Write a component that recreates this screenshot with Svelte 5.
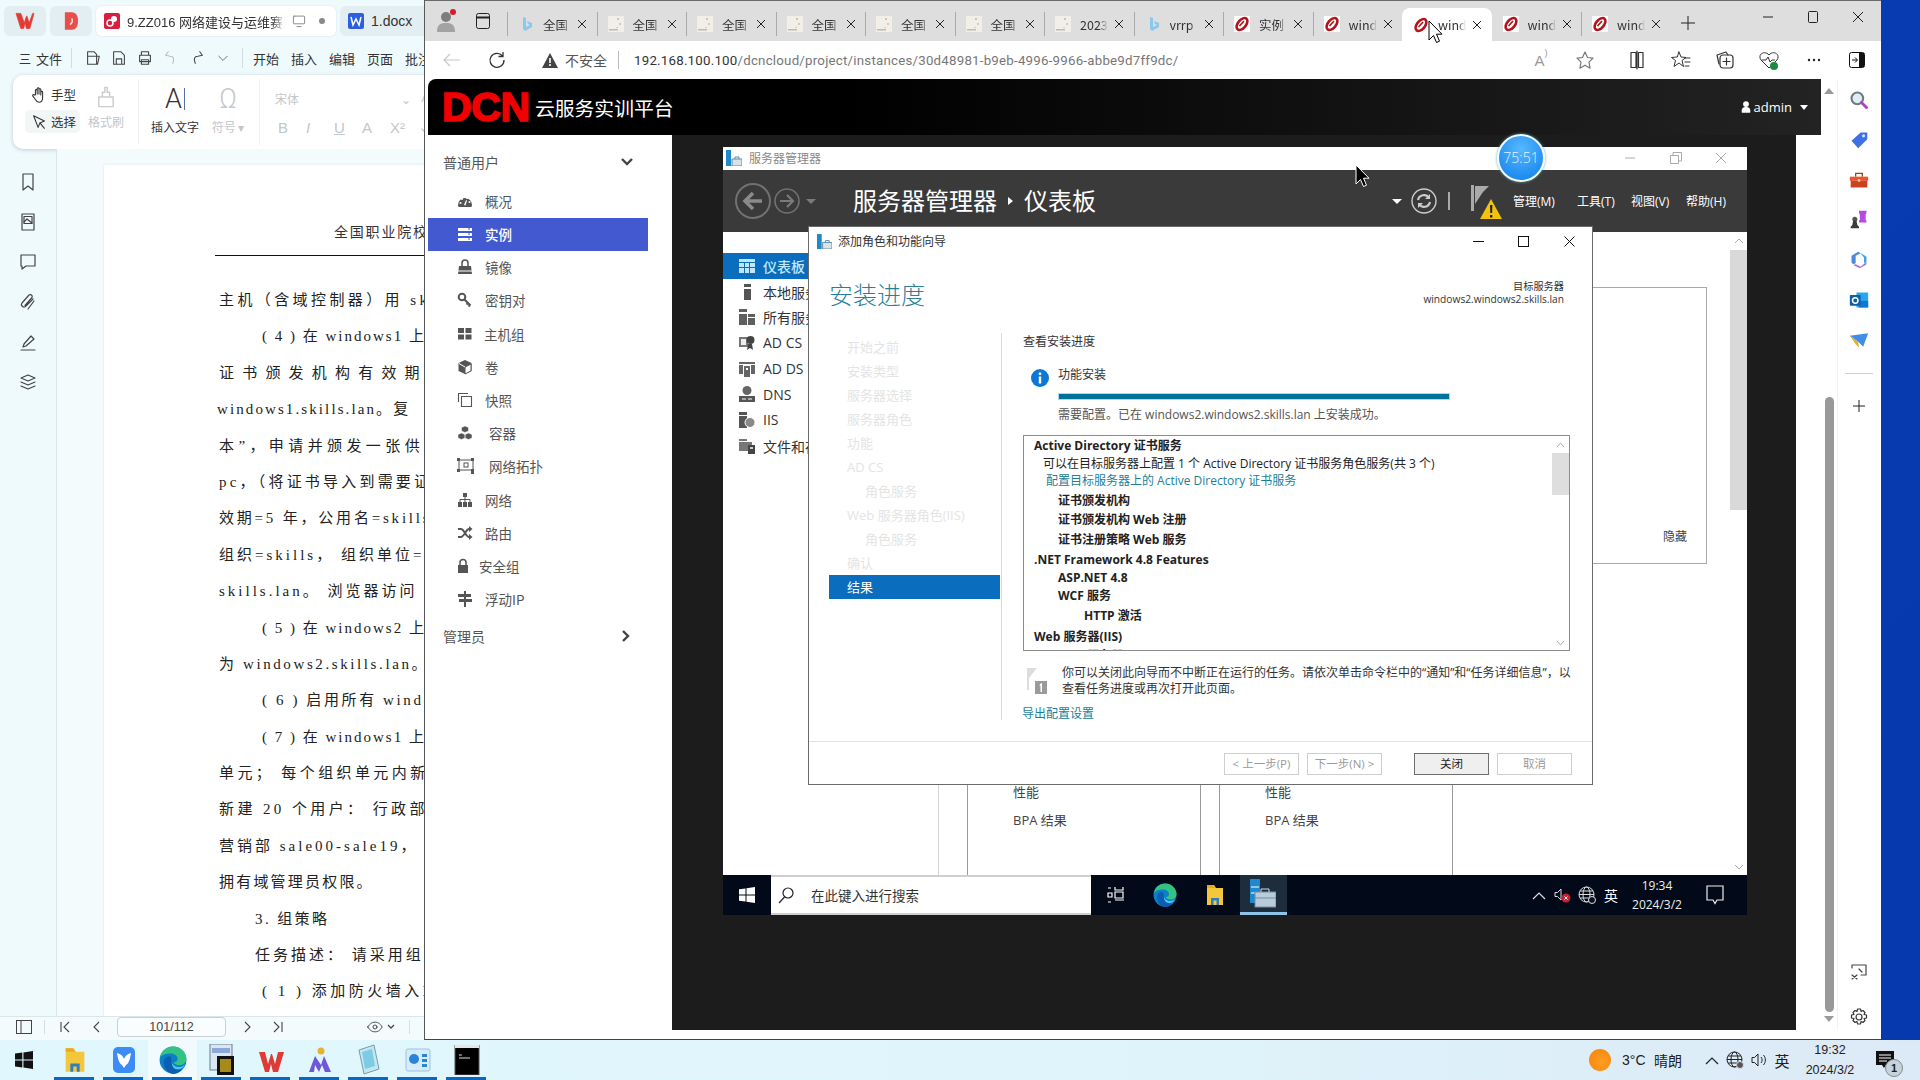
<script>
const svg = (w, h, vb, inner, extra = '') => `<svg width="${w}" height="${h}" viewBox="${vb}" ${extra}>${inner}</svg>`;
const s14 = (inner) => svg(16, 16, '0 0 16 16', inner);
const G = '#555';
const edgeLogo = (n) => svg(n, n, '0 0 24 24', `<circle cx="12" cy="12" r="11.5" fill="#0b7fc9"/><path d="M1 10C2 4 7 .5 12 .5c6.500 0 11.500 5 11.500 10.500 0 3.500-3 5.500-6 5.500-2.500 0-4.500-1-5-2.500 3 0 3.500-2 3.500-3 0-2.500-3-4.500-6-4.500C6 6.500 2.500 7.500 1 10z" fill="#33c481"/><path d="M4 14c0-3.500 3-5.500 6-5 1 3 1 9 5 11 2 1 4 .500 5 0-2.500 3-5.500 4-8 4-4.500-.500-8-5-8-10z" fill="#0a5fb0"/><path d="M11 13c0 3 3 5 6.500 5 2 0 3.500-1 4.500-2-1 2.500-3 4-6 4-3.500 0-5.500-3.500-5-7z" fill="#52c6f0"/>`);
const folder = (n) => svg(n, n, '0 0 24 24', `<path d="M4 2h7l2 3h7v17H4z" fill="#f3c63c"/><path d="M4 2h6l2 3H4z" fill="#e8a91b"/><path d="M8 22v-7h8v7h-2.500v-4.500h-3V22z" fill="#2f7fbf"/>`);
const bing = s14(`<path d="M5 1l3 1v9l4-2-2-1-1-3 5 2v4l-7 4-2-2z" fill="#8cc8ec"/>`);
const doc = s14(`<rect width="16" height="16" fill="#f1efe8"/><rect x="9" y="2" width="2" height="2" fill="#cfc8a8"/><rect x="11" y="7" width="2" height="2" fill="#d8c9b8"/><rect x="8" y="11" width="2" height="1" fill="#d0d0c8"/><rect x="1" y="13" width="9" height="1.500" fill="#bbb"/>`);
const dcn = s14(`<rect width="16" height="16" fill="#fff"/><ellipse cx="8" cy="8" rx="7" ry="4" transform="rotate(-50 8 8)" fill="none" stroke="#b5121b" stroke-width="2.600"/><path d="M5.500 10L10 5" stroke="#b5121b" stroke-width="1.600"/>`);
const tabs = [[bing,'全国'],[doc,'全国'],[doc,'全国'],[doc,'全国'],[doc,'全国'],[doc,'全国'],[doc,'2023'],[bing,'vrrp'],[dcn,'实例'],[dcn,'wind'],[dcn,'wind',1],[dcn,'wind'],[dcn,'wind']];

const lineIc = (n, inner, c = '#444') => svg(n, n, '0 0 20 20', `<g fill="none" stroke="${c}" stroke-width="1.200" stroke-linecap="round" stroke-linejoin="round">${inner}</g>`);
const navItems = [
 ['概况', 28, s14(`<path d="M1 12a7 7 0 1 1 14 0c0 1-.5 2-1 2H2c-.5 0-1-1-1-2z" fill="${G}"/><circle cx="5" cy="6" r="1" fill="#fff"/><circle cx="10" cy="5" r="1" fill="#fff"/><circle cx="12.500" cy="9" r="1" fill="#fff"/><circle cx="3.500" cy="10" r="1" fill="#fff"/><path d="M7 12l2-5 1 .5-1.500 5z" fill="#fff"/>`)],
 ['实例', 28, s14(`<path d="M1 2h14v3H1zM1 7h14v3H1zM1 12h14v3H1z" fill="#fff"/><path d="M11 3h2M11 8h2M11 13h2" stroke="#4359cf"/>`), 1],
 ['镜像', 28, s14(`<path d="M2 7h12l1 8H1z" fill="${G}"/><path d="M5 7V4a3 3 0 0 1 6 0v3" fill="none" stroke="${G}" stroke-width="1.500"/><path d="M1 12h14" stroke="#fff"/>`)],
 ['密钥对', 28, s14(`<circle cx="5" cy="5" r="3.300" fill="none" stroke="${G}" stroke-width="2"/><path d="M7.500 7.500l6 6M11 11l-1.500 1.500M13 13l-1.500 1.500" stroke="${G}" stroke-width="2"/>`)],
 ['主机组', 27, s14(`<path d="M1 2h6v5H1zM8.500 2h6v5h-6zM1 8.500h6v5H1zM8.500 8.500h6v5h-6z" fill="${G}"/>`)],
 ['卷', 28, s14(`<path d="M8 1l6.500 3v8L8 15l-6.500-3V4z" fill="${G}"/><path d="M8 8l6-3v7l-6 3z" fill="#fff" stroke="${G}"/><path d="M2 4.500L8 8" stroke="#fff"/>`)],
 ['快照', 28, s14(`<path d="M1.500 10V1.500H11M4.500 4.500h10v10h-10z" fill="none" stroke="${G}" stroke-width="1.100"/>`)],
 ['容器', 32, s14(`<path d="M8 1l3.500 1.500V6L8 7.500 4.500 6V2.500zM4.500 8L8 9.500V13l-3.500 1.500L1 13V9.500zM11.500 8L15 9.500V13l-3.500 1.500L8 13V9.500z" fill="${G}" stroke="#fff" stroke-width=".500"/>`)],
 ['网络拓扑', 32, svg(18, 16, '0 0 18 16', `<g fill="none" stroke="${G}"><rect x="2" y="2" width="14" height="10"/><rect x="7" y="5" width="4" height="4"/></g><g fill="${G}"><rect x="0" y="0" width="3" height="3"/><rect x="14" y="0" width="3" height="3"/><rect x="0" y="11" width="3" height="3"/><rect x="14" y="11" width="3" height="3"/><rect x="14" y="13" width="3" height="3"/></g>`)],
 ['网络', 28, s14(`<path d="M6 1h4v4H6zM1 10h4v5H1zM6 10h4v5H6zM11 10h4v5h-4z" fill="${G}"/><path d="M3 10V7.500h10V10M8 5v5" fill="none" stroke="${G}"/>`)],
 ['路由', 28, s14(`<path d="M1 4h3c3 0 5 8 8 8h1M1 12h3c3 0 5-8 8-8h1" fill="none" stroke="${G}" stroke-width="2"/><path d="M12 1l3.500 3-3.500 3zM12 9l3.500 3-3.500 3z" fill="${G}"/>`)],
 ['安全组', 22, s14(`<rect x="1" y="7" width="10" height="8" fill="${G}"/><path d="M3 7V4.500a3 3 0 0 1 6 0V7" fill="none" stroke="${G}" stroke-width="1.500"/>`)],
 ['浮动IP', 28, s14(`<path d="M7 0h2v16H7zM1 3h13v3H1zM2 8h13v3H2z" fill="${G}"/>`)],
];

const smIcon = `<rect x="0" y="0" width="5" height="16" fill="#1f89c9"/><path d="M6 9h10v7H6z" fill="#d8e3ea" stroke="#5c89a6"/><path d="M9 9V7h4v2" fill="none" stroke="#5c89a6"/>`;
const smNav = [
 ['本地服务器', svg(16, 16, '0 0 16 16', `<path d="M5 0h7v3H5zM5 5h7v11H5z" fill="#555"/>`)],
 ['所有服务器', svg(16, 16, '0 0 16 16', `<path d="M0 0h8v3H0zM0 5h8v11H0zM9 5h7v3H9zM9 9h7v7H9z" fill="#5f5f5f"/>`)],
 ['AD CS', svg(16, 16, '0 0 16 16', `<path d="M0 2h9v10H0z" fill="#777"/><path d="M2 4h5v6H2z" fill="#eee"/><circle cx="11.500" cy="5" r="4" fill="#444"/><path d="M9 9l-1 6 3-2 3 2-1-6z" fill="#444"/>`)],
 ['AD DS', svg(16, 16, '0 0 16 16', `<path d="M0 1h16v2H0zM0 4h4v9H0zM12 4h4v9h-4zM5 5h6v11H5z" fill="#666"/><path d="M7 7h2v2H7z" fill="#fff"/>`)],
 ['DNS', svg(16, 16, '0 0 16 16', `<circle cx="8" cy="4.500" r="4.500" fill="#666"/><path d="M0 10h16v6H0z" fill="#555"/><path d="M3 13h4M9 13h4" stroke="#fff"/>`)],
 ['IIS', svg(16, 16, '0 0 16 16', `<path d="M0 0h8v3H0zM0 4h8v12H0z" fill="#555"/><circle cx="11" cy="10.500" r="5" fill="#888" stroke="#fff"/>`)],
 ['文件和存储服务', svg(16, 16, '0 0 16 16', `<path d="M0 1h8v2H0zM0 4h13v9H0z" fill="#777"/><path d="M9 7h7v9H9z" fill="#444"/><path d="M11 9h3v2h-3z" fill="#ccc"/>`)],
];
const steps = [['开始之前'],['安装类型'],['服务器选择'],['服务器角色'],['功能'],['AD CS'],['角色服务',1],['Web 服务器角色(IIS)'],['角色服务',1],['确认']];
const listRows = [
 ['Active Directory 证书服务','b',20,10],
 ['可以在目标服务器上配置 1 个 Active Directory 证书服务角色服务(共 3 个)','n',16,19],
 ['配置目标服务器上的 Active Directory 证书服务','l',18.5,22],
 ['证书颁发机构','b',19.5,34],
 ['证书颁发机构 Web 注册','b',19.5,34],
 ['证书注册策略 Web 服务','b',20,34],
 ['.NET Framework 4.8 Features','b',19,10],
 ['ASP.NET 4.8','b',18.500,34],
 ['WCF 服务','b',18.500,34],
 ['HTTP 激活','b',20,60],
 ['Web 服务器(IIS)','b',21,10],
 ['Web 服务器','b',18,34],
];
const docLines = [
 ['主机（含域控制器）用 skills',115,3.4],
 ['( 4 ) 在 windows1 上',158,2],
 ['证书颁发机构有效期',115,8.2],
 ['windows1.skills.lan。复',113,2.1],
 ['本”，申请并颁发一张供 w',115,4.4],
 ['pc，（将证书导入到需要证',115,3.2],
 ['效期=5 年，公用名=skills',115,2.8],
 ['组织=skills， 组织单位=',115,3],
 ['skills.lan。 浏览器访问',115,3],
 ['( 5 ) 在 windows2 上',158,2],
 ['为 windows2.skills.lan。',115,2.6],
 ['( 6 ) 启用所有 windows',158,2.6],
 ['( 7 ) 在 windows1 上',158,2],
 ['单元； 每个组织单元内新',115,3.4],
 ['新建 20 个用户： 行政部 ma',115,3.4],
 ['营销部 sale00-sale19，',115,3],
 ['拥有域管理员权限。',115,2.2],
 ['3. 组策略',151,2.4],
 ['任务描述： 请采用组策',151,3],
 ['( 1 ) 添加防火墙入站',158,3.5],
];
const railIcons = [
 lineIc(20,`<path d="M5 2h10v16l-5-4-5 4z"/>`),
 lineIc(20,`<rect x="4" y="2" width="12" height="16"/><rect x="6" y="4.500" width="8" height="7"/><path d="M6 10l3-3 5 4"/>`),
 lineIc(20,`<path d="M3 3h14v11H8l-4 3v-3H3z"/>`),
 lineIc(20,`<path d="M15 7L8 14a2.500 2.500 0 0 1-4-3l7-8a2 2 0 0 1 3 2.500l-7 8"/><path d="M16 9l-6 8"/>`),
 lineIc(20,`<path d="M6 12l7-8 3 3-8 7-3 1zM3 18h14"/>`),
 lineIc(20,`<path d="M10 3l7 3-7 3-7-3zM3 10l7 3 7-3M3 14l7 3 7-3"/>`),
];
const actionIcons = [
 lineIc(18,`<path d="M4 3h7l3 3v11H4zM4 8h13l-2 9"/>`,'#444'),
 lineIc(18,`<path d="M4 3h8l4 4v10H4zM7 17v-6h6v6"/>`,'#444'),
 lineIc(18,`<path d="M6 7V3h8v4M4 7h12v7H4zM6 12h8v5H6z"/>`,'#444'),
 lineIc(18,`<path d="M7 3L4 7l5 1c4 0 5 3 3 8"/>`,'#bbb'),
 lineIc(18,`<path d="M13 3l3 4-5 1C7 8 6 11 8 16"/>`,'#444'),
 lineIc(12,`<path d="M3 7l7 7 7-7"/>`,'#444'),
];
const edgeTools = [
 lineIc(20,`<path d="M4 2.500h5v15H4zM11.500 2.500H16v15h-4.500zM10 1v18"/>`,'#333'),
 lineIc(20,`<path d="M8 2l2 5 5 .5-4 3 1.500 6L8 13l-5 3.500 1.500-6-4-3 5.500-.5zM14 8h5M14 12h5M14 16h4" stroke-width="1"/>`,'#333'),
 lineIc(20,`<rect x="5" y="5" width="13" height="13" rx="3"/><path d="M4 14l-2-9 9-3 2 3M11.500 8v7M8 11.500h7"/>`,'#333'),
];
const rail = [
 svg(20,20,'0 0 24 24',`<circle cx="10" cy="10" r="7" fill="#dfeef5" stroke="#6e7c80" stroke-width="2.500"/><path d="M15 15l6 6" stroke="#b23fc0" stroke-width="3.500" stroke-linecap="round"/>`),
 svg(20,20,'0 0 24 24',`<path d="M3 13L14 3h8v8L11 22z" fill="#3f6fe8"/><circle cx="17.500" cy="7" r="2" fill="#cfe0ff"/>`),
 svg(20,20,'0 0 24 24',`<path d="M8 8V4h8v4" fill="none" stroke="#9c3f1c" stroke-width="1.500"/><path d="M1 8h22v5H1z" fill="#e8562a"/><path d="M2 13h20v8H2z" fill="#c8431e"/><rect x="10.500" y="11" width="3" height="3" fill="#f3d5b0"/>`),
 svg(20,20,'0 0 24 24',`<path d="M12 1h9v3l-1 1v7l1 1v2h-9v-2l1-1V5l-1-1z" fill="#b948e2"/><circle cx="7" cy="11" r="3" fill="#555"/><path d="M5 13h4l1 5 2 2v2H2v-2l2-2z" fill="#3a3a3a"/>`),
 svg(20,20,'0 0 24 24',`<path d="M3 7l8-5 3 2-6 3v9l-3 1-2-2z" fill="#4a8be0"/><path d="M13 3l8 5v6l-3 2V9z" fill="#3aa4e8"/><path d="M5 18l3-1 6 3 7-6c0 2 0 3-1 4l-7 4z" fill="#a070e0"/><circle cx="12" cy="12" r="3.500" fill="#fff"/>`),
 svg(20,20,'0 0 24 24',`<path d="M9 3h14v18H9z" fill="#28a8ea"/><path d="M12 13h11v8H12z" fill="#0a78d4"/><rect x="1" y="6" width="13" height="13" rx="1" fill="#0f5fa8"/><circle cx="7.500" cy="12.500" r="3.300" fill="none" stroke="#fff" stroke-width="1.800"/>`),
 svg(20,20,'0 0 24 24',`<path d="M1 7l22-3-6 16-6-6z" fill="#3f8ee8"/><path d="M1 7l10 7 1 7-4-4z" fill="#d9b23c"/>`),
];
const winLogo = (n, c) => svg(n, n, '0 0 16 16', `<path d="M0 2.300L6.500 1.400V7.500H0zM7.500 1.300L16 0v7.500H7.500zM0 8.500h6.500v6.100L0 13.700zM7.500 8.500H16V16l-8.500-1.300z" fill="${c}"/>`);
const taskIcons = [
 [folder(28)],
 [svg(28,28,'0 0 28 28',`<rect x="3" y="1" width="22" height="26" rx="5" fill="#3d8cf5"/><path d="M7 7c4 1 6 3 7 6 1-3 3-5 7-6-1 6-2 10-5 12l-2 3-2-3c-3-2-4-6-5-12z" fill="#fff"/>`)],
 [edgeLogo(28),1],
 [svg(28,32,'0 0 28 32',`<rect x="2" y="0" width="22" height="26" fill="#dce6f2" stroke="#6a7a90"/><rect x="4" y="4" width="18" height="5" fill="#8aa8d8"/><rect x="9" y="12" width="17" height="19" fill="#111"/><rect x="12" y="15" width="11" height="13" fill="#a88a1c"/>`)],
 [svg(28,28,'0 0 28 28',`<path d="M2 6h6l3 12 3-10h1l3 10 3-12h6l-6 20h-5l-2-8-2 8H8z" fill="#e03a36"/>`)],
 [svg(28,28,'0 0 28 28',`<circle cx="15" cy="5" r="3.500" fill="#eab12e"/><path d="M3 26l6-16 6 9 3-9 7 16h-6l-3-7-3 7-4-7-1 7z" fill="#6e58d8"/>`)],
 [svg(28,32,'0 0 28 32',`<path d="M4 6l15-5 5 24-15 5z" fill="#bfe8f2" stroke="#7d9aa8"/><path d="M7 8l10-3 3 17-10 3z" fill="#7dcbe4"/>`)],
 [svg(28,28,'0 0 28 28',`<rect x="2" y="3" width="24" height="22" rx="2" fill="#d5ecfa" stroke="#9cc4e0"/><circle cx="10" cy="13" r="5" fill="#2a84d8"/><path d="M18 8h5v3h-5zM18 13h5v3h-5zM18 18h5v3h-5z" fill="#2a84d8"/>`)],
 [svg(28,30,'0 0 28 30',`<rect x="2" y="0" width="24" height="30" fill="#000" stroke="#555"/><rect x="2" y="0" width="24" height="3" fill="#e6e6e6"/><path d="M6 10h3M6 13h6M12 13h5" stroke="#ddd"/>`)],
];
const pg = (d) => svg(14,14,'0 0 14 14',`<path d="${d}" fill="none" stroke="#444" stroke-width="1.100"/>`);
</script>

<div class="desk">
  <div class="screen">
    <section class="wps">
      <div class="wtabs">
        <div class="wtile"><span class="wlogo">{@html svg(20,18,'0 0 28 26',`<path d="M1 2h7l5 14 3-10h1l3 10 5-14h2l-6 22h-5l-2-8-2 8H8z" fill="#e33a33" stroke="#e33a33"/>`)}</div>
        <div class="wtile">{@html svg(14,18,'0 0 16 20',`<path d="M1 0h8c5 0 7 4 7 10s-2 10-7 10H1z" fill="#ea4e4a"/><path d="M7 14c3-2 3-4 2-7" fill="none" stroke="#fff" stroke-width="1.500"/>`)}</div>
        <div class="wtab active">
          {@html svg(16,16,'0 0 16 16',`<rect width="16" height="16" rx="2" fill="#d81e3f"/><circle cx="6" cy="10" r="3" fill="none" stroke="#fff" stroke-width="1.500"/><circle cx="10" cy="6" r="3" fill="#fff"/>`)}
          <span class="wtt">9.ZZ016 网络建设与运维赛题库</span>
          {@html lineIc(14,`<rect x="2" y="3" width="16" height="11" rx="1"/><path d="M7 18h6"/>`,'#777')}
          <i class="wdot"></i>
        </div>
        <div class="wtab">
          {@html svg(16,16,'0 0 16 16',`<rect width="16" height="16" rx="2" fill="#2b5fe0"/><path d="M3 4l2 8 3-6 3 6 2-8" fill="none" stroke="#fff" stroke-width="1.500"/>`)}
          <span>1.docx</span>
        </div>
      </div>
      <div class="wmenu">
        <span class="hb">三</span><span class="mi">文件</span><i class="vs"></i>
        {#each actionIcons as a}<span class="act">{@html a}</span>{/each}
        <i class="vs s2"></i>
        {#each ['开始','插入','编辑','页面','批注'] as m}<span class="mt">{m}</span>{/each}
      </div>
      <div class="wcard">
        <div class="grp g1">
          <div class="tl"><span class="tic">{@html lineIc(18,`<path d="M6 10V5a1 1 0 0 1 2 0v4V3a1 1 0 0 1 2 0v6-5a1 1 0 0 1 2 0v6-3a1 1 0 0 1 2 0v6c0 4-2 5-4 5s-3-1-4-3l-3-4c-.5-1 1-2 2-1z"/>`,'#333')}</span>手型</div>
          <div class="tl sel"><span class="tic">{@html lineIc(18,`<path d="M4 3l12 6-5 2-2 5z M11 11l5 6"/>`,'#333')}</span>选择</div>
        </div>
        <div class="grp g2 off">
          {@html lineIc(24,`<path d="M4 10h12v8H4zM7 10V6h2V2h2v4h2v4"/>`,'#ccc')}
          <span>格式刷</span>
        </div>
        <i class="cs"></i>
        <div class="grp g3">
          <span class="big">A<i class="ibar"></i></span>
          <span>插入文字</span>
        </div>
        <div class="grp g4 off">
          <span class="big om">Ω</span>
          <span>符号 ▾</span>
        </div>
        <i class="cs c3"></i>
        <div class="grp g5 off">
          <div class="fontrow"><span>宋体</span><span class="fr">⌄</span><span class="fs">小</span></div>
          <div class="fmt"><span class="fb">B</span><span class="fb it">I</span><span class="fb un">U</span><span class="fb">A</span><span class="fb">X²</span><span class="fc">⌄</span></div>
        </div>
      </div>
      <div class="wmain">
        <div class="wrail">{#each railIcons as r}<span>{@html r}</span>{/each}</div>
        <div class="wdoc">
          <div class="page">
            <div class="phead">全国职业院校技能大赛</div>
            <div class="phr"></div>
            {#each docLines as l}<div class="pl" style="padding-left:{l[1]}px;letter-spacing:{l[2]}px">{l[0]}</div>{/each}
          </div>
        </div>
      </div>
      <div class="wstat">
        <span class="st1">{@html svg(16,14,'0 0 16 14',`<rect x=".5" y=".5" width="15" height="13" fill="none" stroke="#444"/><path d="M5 1v12" stroke="#444"/>`)}</span>
        <i class="ss"></i>
        <span class="nv n1">{@html pg('M3 2v10M11 2L6 7l5 5')}</span>
        <span class="nv n2">{@html pg('M9 2L4 7l5 5')}</span>
        <span class="pgbox">101/112</span>
        <span class="nv n3">{@html pg('M5 2l5 5-5 5')}</span>
        <span class="nv n4">{@html pg('M3 2l5 5-5 5M11 2v10')}</span>
        <span class="eye">{@html lineIc(16,`<path d="M1 10c3-5 6-6 9-6s6 1 9 6c-3 5-6 6-9 6s-6-1-9-6z"/><circle cx="10" cy="10" r="2.500"/>`,'#444')}</span><span class="ch">{@html svg(8,6,'0 0 8 6',`<path d="M1 1l3 3 3-3" fill="none" stroke="#444" stroke-width="1.300"/>`)}</span>
        <i class="ss s3"></i>
      </div>
    </section>

    <section class="edge">
      <div class="strip">
        <div class="prof">
          <span class="avatar">{@html svg(22,26,'0 0 22 26',`<circle cx="10" cy="9" r="5" fill="#7d7d7d"/><path d="M1 24c0-8 4-9 9-9s9 1 9 9z" fill="#a3a3a3"/><circle cx="17" cy="4" r="3" fill="#d81b2c"/>`)}</span>
          <span class="tabact">{@html svg(14,16,'0 0 14 16',`<rect x=".5" y=".5" width="13" height="15" rx="2" fill="none" stroke="#222"/><path d="M1 4.500h12" stroke="#222" stroke-width="2"/>`)}</span>
        </div>
        <div class="tabs">
          {#each tabs as t}
            <div class="tab" class:on={t[2]}>
              <span class="fav">{@html t[0]}</span>
              <span class="tt">{t[1]}</span>
              <span class="tx">{@html svg(10,10,'0 0 10 10',`<path d="M1 1l8 8M9 1l-8 8" stroke="#222" stroke-width="1"/>`)}</span>
            </div>
          {/each}
        </div>
        <span class="plus">{@html svg(16,16,'0 0 16 16',`<path d="M8 1v14M1 8h14" stroke="#222"/>`)}</span>
        <div class="wctl">
          <span>{@html svg(12,12,'0 0 12 12',`<path d="M1 6h10" stroke="#222"/>`)}</span>
          <span>{@html svg(12,12,'0 0 12 12',`<rect x="1.500" y=".5" width="9" height="11" rx="1" fill="none" stroke="#222"/>`)}</span>
          <span>{@html svg(12,12,'0 0 12 12',`<path d="M1 1l10 10M11 1L1 11" stroke="#222"/>`)}</span>
        </div>
      </div>
      <div class="addr">
        <span class="back">{@html svg(18,14,'0 0 18 14',`<path d="M17 7H1M7 1L1 7l6 6" fill="none" stroke="#c8c8c8" stroke-width="1.200"/>`)}</span>
        <span class="rel">{@html svg(18,18,'0 0 18 18',`<path d="M14.500 5A7 7 0 1 0 16 9M15 1v4.500h-4.500" fill="none" stroke="#333" stroke-width="1.300"/>`)}</span>
        <span class="warn">{@html svg(16,15,'0 0 16 15',`<path d="M8 0l8 15H0z" fill="#444"/><path d="M7.200 5h1.600v5H7.200zM7.200 11h1.600v2H7.200z" fill="#fff"/>`)}</span>
        <span class="insec">不安全</span>
        <i class="asep"></i>
        <span class="url"><b>192.168.100.100</b>/dcncloud/project/instances/30d48981-b9eb-4996-9966-abbe9d7ff9dc/</span>
        <div class="tools">
          <span class="t1 ra">A<small>)</small></span>
          <span class="t2">{@html lineIc(20,`<path d="M10 2l2.500 5.500 5.500.7-4 4 1 6-5-3-5 3 1-6-4-4 5.500-.7z"/>`,'#777')}</span>
          <span class="t3">{@html edgeTools[0]}</span>
          <span class="t4">{@html edgeTools[1]}</span>
          <span class="t5">{@html edgeTools[2]}</span>
          <span class="t6">{@html svg(22,22,'0 0 22 22',`<path d="M11 19L3 11c-4-6 4-10 8-5 4-5 12-1 8 5z" fill="none" stroke="#333"/><path d="M4 11h4l2-3 2 5 2-2h3" fill="none" stroke="#333"/><circle cx="16" cy="17" r="4" fill="#1e8a3e"/>`)}</span>
          <span class="t7">{@html svg(14,4,'0 0 14 4',`<circle cx="2" cy="2" r="1.200" fill="#222"/><circle cx="7" cy="2" r="1.200" fill="#222"/><circle cx="12" cy="2" r="1.200" fill="#222"/>`)}</span>
          <span class="t8">{@html svg(16,16,'0 0 16 16',`<rect x=".5" y=".5" width="15" height="15" rx="2" fill="none" stroke="#111"/><rect x="10" y="1" width="5" height="14" fill="#111"/><path d="M3 8h5M6 5.500L8.500 8 6 10.500" fill="none" stroke="#111"/>`)}</span>
        </div>
      </div>
      <div class="viewport">
        <div class="pagewrap">
          <header class="dhead">
            <span class="dlogo">DCN</span>
            <span class="dname">云服务实训平台</span>
            <span class="admin">{@html svg(10,14,'0 0 12 14',`<circle cx="6" cy="3.500" r="3.500" fill="#fff"/><path d="M1 14c-1-6 2-7 5-7s6 1 5 7z" fill="#fff"/>`)}admin<i class="caret"></i></span>
          </header>
          <div class="dbody">
            <aside class="snav">
              <div class="sect"><span>普通用户</span>{@html svg(12,10,'0 0 12 10',`<path d="M1 2l5 5 5-5" fill="none" stroke="#444" stroke-width="2.400"/>`)}</div>
              {#each navItems as n}
                <div class="sit" class:cur={n[3]}>
                  <span class="sic" style="width:{n[1]}px">{@html n[2]}</span><span>{n[0]}</span>
                </div>
              {/each}
              <div class="sect s2"><span>管理员</span>{@html svg(10,12,'0 0 10 12',`<path d="M2 1l5 5-5 5" fill="none" stroke="#444" stroke-width="2.400"/>`)}</div>
            </aside>
            <main class="stage">
              <div class="vm">
                <div class="vtitle">
                  <span class="vic">{@html svg(16,16,'0 0 16 16',smIcon)}</span>
                  <span class="vname">服务器管理器</span>
                  <div class="vctl">
                    <span>{@html svg(12,12,'0 0 12 12',`<path d="M1 6h10" stroke="#aaa"/>`)}</span>
                    <span>{@html svg(12,12,'0 0 12 12',`<path d="M.5 3.500h8v8h-8zM3 3V.5h8.500V9H9" fill="none" stroke="#aaa"/>`)}</span>
                    <span>{@html svg(12,12,'0 0 12 12',`<path d="M1 1l10 10M11 1L1 11" stroke="#aaa"/>`)}</span>
                  </div>
                </div>
                <div class="vhead">
                  <span class="backb">{@html svg(36,36,'0 0 36 36',`<circle cx="18" cy="18" r="17" fill="none" stroke="#717171" stroke-width="2"/><path d="M27 18H11M18 10l-8 8 8 8" fill="none" stroke="#8a8a8a" stroke-width="3.500"/>`)}</span>
                  <span class="fwdb">{@html svg(26,26,'0 0 26 26',`<circle cx="13" cy="13" r="12" fill="none" stroke="#717171" stroke-width="1.600"/><path d="M6 13h13M13 7l6 6-6 6" fill="none" stroke="#7a7a7a" stroke-width="2.200"/>`)}</span>
                  <i class="ddn gray"></i>
                  <span class="crumb">服务器管理器</span>
                  <i class="crumbar"></i>
                  <span class="crumb c2">仪表板</span>
                  <div class="vr">
                    <i class="ddn"></i>
                    <span class="refresh">{@html svg(26,26,'0 0 26 26',`<circle cx="13" cy="13" r="12" fill="none" stroke="#ccc" stroke-width="1.400"/><path d="M7 12a6 6 0 0 1 11-2M19 14a6 6 0 0 1-11 2" fill="none" stroke="#ccc" stroke-width="2.200"/><path d="M19 6v5h-5zM7 20v-5h5z" fill="#ccc"/>`)}</span>
                    <i class="vbar"></i>
                    <span class="flag">{@html svg(32,36,'0 0 32 36',`<rect x="0" y="0" width="3" height="26" fill="#aaa"/><path d="M4 1h14l-6 6-8 12z" fill="#aaa"/><path d="M20 14l11 20H9z" fill="#f4c20d"/><path d="M19 20h2.400l-.3 8h-1.800zM19 30h2.400v2.400H19z" fill="#222"/>`)}</span>
                    <span class="vm1">管理(M)</span><span class="vm2">工具(T)</span><span class="vm3">视图(V)</span><span class="vm4">帮助(H)</span>
                  </div>
                </div>
                <div class="vbody">
                  <nav class="vnav">
                    <div class="vrow cur">{@html svg(16,16,'0 0 16 16',`<path d="M0 1h16v3H0zM0 5h5v4H0zM6 5h4v4H6zM11 5h5v4h-5zM0 10h5v5H0zM6 10h4v5H6zM11 10h5v5h-5z" fill="#bfe6ff"/>`)}<span>仪表板</span></div>
                    {#each smNav as r}<div class="vrow">{@html r[1]}<span>{r[0]}</span></div>{/each}
                  </nav>
                  <div class="vcont">
                    <div class="welcome"><span>隐藏</span></div>
                    <div class="cards">
                      <div class="vcard"><span>性能</span><span>BPA 结果</span></div>
                      <div class="vcard"><span>性能</span><span>BPA 结果</span></div>
                    </div>
                  </div>
                  <div class="vscroll">
                    <span>{@html svg(10,6,'0 0 10 6',`<path d="M1 5l4-4 4 4" fill="none" stroke="#aaa"/>`)}</span>
                    <i class="vthumb"></i>
                    <span class="vdn">{@html svg(10,6,'0 0 10 6',`<path d="M1 1l4 4 4-4" fill="none" stroke="#aaa"/>`)}</span>
                  </div>
                </div>
                <div class="vtask">
                  <span class="vstart">{@html winLogo(16,'#fff')}</span>
                  <div class="vsearch">{@html svg(18,18,'0 0 18 18',`<circle cx="11" cy="7" r="5" fill="none" stroke="#222" stroke-width="1.200"/><path d="M7.500 11L2 17" stroke="#222" stroke-width="1.200"/>`)}<span>在此键入进行搜索</span></div>
                  <span class="vt">{@html svg(18,18,'0 0 18 18',`<path d="M1 2h3M1 16h3M8 1v3h8V1M8 6h8v6H8zM8 14h9M1 7h4v4H1z" fill="none" stroke="#fff" stroke-width="1.200"/>`)}</span>
                  <span class="vt">{@html edgeLogo(24)}</span>
                  <span class="vt">{@html folder(24)}</span>
                  <span class="vt act2">{@html svg(26,30,'0 0 26 30',`<rect x="0" y="0" width="10" height="24" fill="#1f89d0"/><path d="M1 8h8M1 14h8" stroke="#fff"/><rect x="5" y="13" width="21" height="15" fill="#b9ccd8" stroke="#6d91a8"/><path d="M11 13v-3h8v3" fill="none" stroke="#cdd"/><path d="M5 19h21" stroke="#6d91a8"/>`)}</span>
                  <div class="vtray">
                    <span class="vti">{@html svg(14,9,'0 0 14 9',`<path d="M1 8l6-6 6 6" fill="none" stroke="#ddd" stroke-width="1.200"/>`)}</span>
                    <span class="vti">{@html svg(18,18,'0 0 18 18',`<path d="M1 6.500h2.500L7 3v11L3.500 10.500H1z" fill="none" stroke="#ddd"/><circle cx="12" cy="12" r="4.500" fill="#c8202c"/><path d="M10.500 10.500l3 3M13.500 10.500l-3 3" stroke="#fff"/>`)}</span>
                    <span class="vti">{@html svg(18,18,'0 0 18 18',`<circle cx="8.500" cy="8.500" r="7.500" fill="none" stroke="#ddd"/><ellipse cx="8.500" cy="8.500" rx="3.500" ry="7.500" fill="none" stroke="#ddd"/><path d="M1 8.500h15M2 5h13M2 12h13" stroke="#ddd"/><circle cx="14" cy="14" r="3.500" fill="#0a1020" stroke="#ddd"/>`)}</span>
                    <span class="vlang">英</span>
                    <span class="vclock"><span>19:34</span><span>2024/3/2</span></span>
                    <span class="vnote">{@html svg(18,20,'0 0 18 20',`<path d="M1 1h16v14H11l-2 3.500L7 15H1z" fill="none" stroke="#eee" stroke-width="1.200"/>`)}</span>
                  </div>
                </div>
                <div class="timer">75:51</div>
                <div class="dialog">
                  <div class="dtitle">
                    <span class="dic">{@html svg(15,15,'0 0 16 16',smIcon)}</span>
                    <span>添加角色和功能向导</span>
                    <div class="dctl">
                      <span>{@html svg(11,11,'0 0 11 11',`<path d="M0 5.500h11" stroke="#111"/>`)}</span>
                      <span>{@html svg(11,11,'0 0 11 11',`<rect x=".5" y=".5" width="10" height="10" fill="none" stroke="#111"/>`)}</span>
                      <span>{@html svg(11,11,'0 0 11 11',`<path d="M.5 .5l10 10M10.500 .5l-10 10" stroke="#111"/>`)}</span>
                    </div>
                  </div>
                  <div class="dhd">
                    <h1>安装进度</h1>
                    <div class="target"><div>目标服务器</div><div>windows2.windows2.skills.lan</div></div>
                  </div>
                  <div class="dmain">
                    <div class="dsteps">
                      {#each steps as s}<div class="stp" class:ind={s[1]}>{s[0]}</div>{/each}
                      <div class="stp now">结果</div>
                    </div>
                    <div class="dright">
                      <div class="dh2">查看安装进度</div>
                      <div class="dprog">
                        <span class="dinfo">{@html svg(18,18,'0 0 18 18',`<circle cx="9" cy="9" r="9" fill="#0a78d4"/><path d="M7.800 3.500h2.400v2.400H7.800zM7.800 7.500h2.400v7H7.800z" fill="#fff"/>`)}</span>
                        <div class="dpc">
                          <div>功能安装</div>
                          <div class="bar"></div>
                          <div class="okmsg">需要配置。已在 windows2.windows2.skills.lan 上安装成功。</div>
                        </div>
                      </div>
                      <div class="listbox">
                        <div class="listin">
                          {#each listRows as r}<div class="lr {r[1]}" style="height:{r[2]}px;line-height:{r[2]}px;padding-left:{r[3]}px">{r[0]}</div>{/each}
                        </div>
                        <div class="lscroll">
                          <span>{@html svg(9,6,'0 0 9 6',`<path d="M1 5l3.500-4L8 5" fill="none" stroke="#aaa"/>`)}</span>
                          <i></i>
                          <span class="ld">{@html svg(9,6,'0 0 9 6',`<path d="M1 1l3.500 4L8 1" fill="none" stroke="#aaa"/>`)}</span>
                        </div>
                      </div>
                      <div class="note">
                        <span class="nic">{@html svg(20,26,'0 0 20 26',`<rect x="0" y="0" width="2" height="22" fill="#ddd"/><path d="M2 0h8L2 10z" fill="#ddd"/><rect x="8" y="13" width="12" height="13" fill="#9a9a9a"/><path d="M13 16l2-1v9h-1.500v-6.500l-1 .5z" fill="#fff"/>`)}</span>
                        <div>你可以关闭此向导而不中断正在运行的任务。请依次单击命令栏中的“通知”和“任务详细信息”，以<br/>查看任务进度或再次打开此页面。</div>
                      </div>
                      <div class="export">导出配置设置</div>
                    </div>
                  </div>
                  <div class="dfoot">
                    <span class="btn dis">&lt; 上一步(P)</span>
                    <span class="btn dis">下一步(N) &gt;</span>
                    <span class="btn pri">关闭</span>
                    <span class="btn dis">取消</span>
                  </div>
                </div>
              </div>
            </main>
            <div class="pgright"></div>
          </div>
        </div>
        <div class="bscroll">
          <i class="tri up"></i>
          <i class="bthumb"></i>
          <i class="tri dn"></i>
        </div>
        <aside class="erail">
          {#each rail as r}<span class="ri">{@html r}</span>{/each}
          <i class="rsep"></i>
          <span class="rplus">{@html svg(14,14,'0 0 14 14',`<path d="M7 1v12M1 7h12" stroke="#222"/>`)}</span>
          <span class="rshot">{@html lineIc(20,`<path d="M3 6V3h14v10h-5M3 13l5 4M8 13l-5 4M10 7l3 3"/>`,'#444')}</span>
          <span class="rgear">{@html lineIc(20,`<circle cx="10" cy="10" r="3"/><path d="M8.500 2h3l.5 2.500 2-1 2 2-1 2 2.500.5v3L15 11.500l1 2-2 2-2-1-.5 2.500h-3L8 14.500l-2 1-2-2 1-2L2.500 11V8L5 7.500l-1-2 2-2 2 1z"/>`,'#333')}</span>
        </aside>
      </div>
    </section>
    <div class="bluefill"></div>
    <span class="cursor c1">{@html svg(15,24,'0 0 15 24',`<path d="M1 1v19l4.500-4.500 3 7 3-1.300-3-7H14z" fill="#000" stroke="#fff"/>`)}</span>
    <span class="cursor c2">{@html svg(15,24,'0 0 15 24',`<path d="M1 1v19l4.500-4.500 3 7 3-1.300-3-7H14z" fill="#fff" stroke="#000"/>`)}</span>
  </div>

  <footer class="tbar">
    <span class="start">{@html winLogo(18,'#111')}</span>
    {#each taskIcons as t}<span class="tk" class:hot={t[1]}>{@html t[0]}<i></i></span>{/each}
    <div class="tray">
      <span class="sun"></span>
      <span class="wx">3°C</span>
      <span class="wx2">晴朗</span>
      <span class="ti up2">{@html svg(14,9,'0 0 14 9',`<path d="M1 8l6-6 6 6" fill="none" stroke="#222" stroke-width="1.200"/>`)}</span>
      <span class="ti">{@html svg(18,18,'0 0 18 18',`<circle cx="8.500" cy="8.500" r="7.500" fill="none" stroke="#222"/><ellipse cx="8.500" cy="8.500" rx="3.500" ry="7.500" fill="none" stroke="#222"/><path d="M1 8.500h15M2 5h13M2 12h13" stroke="#222"/><circle cx="14" cy="14" r="3.500" fill="#555" stroke="#dde"/>`)}</span>
      <span class="ti sp">{@html svg(18,18,'0 0 18 18',`<path d="M1 6.500h2.500L7 3v12l-3.500-3.500H1z" fill="none" stroke="#222"/><path d="M10 6c1.500 2 1.500 4 0 6M12.500 4c2.500 3 2.500 7 0 10" fill="none" stroke="#222"/>`)}</span>
      <span class="lang">英</span>
      <span class="clock"><span>19:32</span><span>2024/3/2</span></span>
      <span class="msg">{@html svg(20,20,'0 0 20 20',`<path d="M1 1h18v14H11l-2 3-2-3H1z" fill="#111"/><path d="M4 5h12M4 8h12M4 11h8" stroke="#fff"/>`)}<b>1</b></span>
    </div>
  </footer>
</div>

<style>
:global(body){margin:0;background:#0a3bb0;}
.desk{width:1920px;height:1080px;display:flex;flex-direction:column;overflow:hidden;font-family:"Open Sans","Noto Sans CJK SC",sans-serif;color:#333;background:#0a3bb0;}
.desk :global(svg){display:block;flex:none;}
i{display:block;}
.screen{position:relative;height:1040px;flex:none;display:flex;background:linear-gradient(135deg,#0b3db8,#0639ad);}
.bluefill{flex:1;}

/* WPS */
.wps{width:424px;flex:none;display:flex;flex-direction:column;background:#effafd;overflow:hidden;font-family:"Noto Sans CJK SC",sans-serif;}
.wtabs{height:41px;flex:none;display:flex;box-sizing:border-box;padding:6px 0 5px 4px;gap:4px;}
.wtile{width:42px;flex:none;background:#e2eef1;border-radius:6px;display:flex;align-items:center;justify-content:center;}
.wtab{display:flex;flex:none;align-items:center;background:#e2eef1;border-radius:6px 0 0 6px;padding-left:8px;gap:7px;font:14px "Liberation Sans","Noto Sans CJK SC",sans-serif;width:85px;box-sizing:border-box;color:#333;}
.wtab.active{width:240px;background:#fff;border-radius:6px;box-shadow:0 0 2px #cde;font-size:13px;}
.wtt{width:158px;flex:none;white-space:nowrap;overflow:hidden;-webkit-mask-image:linear-gradient(90deg,#000 92%,transparent);mask-image:linear-gradient(90deg,#000 92%,transparent);}
.wdot{width:6px;height:6px;border-radius:50%;background:#888;margin-left:6px;}
.wmenu{height:34px;flex:none;display:flex;align-items:center;padding-left:19px;font-size:13px;color:#333;white-space:nowrap;}
.hb{font-size:12px;width:17px;flex:none;}
.mi{width:29px;flex:none;}
.vs{width:1px;height:20px;flex:none;background:#d5dcdf;margin:0 8px 0 6px;}
.act{width:26px;flex:none;display:flex;justify-content:center;}
.vs.s2{margin:0 10px 0 6px;}
.mt{width:38px;flex:none;}
.wcard{height:74px;flex:none;margin-left:13px;width:440px;box-sizing:border-box;background:#fff;border-radius:10px;box-shadow:0 1px 4px rgba(60,90,100,.28);display:flex;font-size:12px;color:#333;white-space:nowrap;}
.grp{display:flex;flex-direction:column;flex:none;}
.g1{width:62px;margin-left:12px;padding-top:8px;box-sizing:border-box;}
.tl{height:23px;display:flex;align-items:center;width:55px;border-radius:5px;gap:3px;padding-left:5px;box-sizing:border-box;margin-bottom:4px;font-size:12.500px;}
.tl.sel{background:#f3f6f7;}
.tic{width:18px;}
.off{color:#c2c7c9;}
.g2{width:36px;margin-left:1px;align-items:center;padding-top:10px;gap:4px;}
.cs{width:1px;height:66px;flex:none;background:#eef1f2;margin-top:4px;margin-left:14px;}
.g3{margin-left:11px;width:50px;align-items:center;padding-top:4px;}
.big{font:300 27px/36px Roboto,sans-serif;height:39px;display:flex;align-items:center;color:#333;}
.ibar{width:1px;height:22px;background:#5a6f9e;margin-left:2px;}
.om{color:#c5c9cb;}
.g4{margin-left:8px;width:40px;align-items:center;padding-top:4px;}
.cs.c3{margin-left:11px;}
.g5{margin-left:15px;padding-top:12px;width:170px;}
.fontrow{display:flex;height:22px;align-items:center;font-size:12px;}
.fr{margin-left:102px;}
.fs{margin-left:10px;}
.fmt{display:flex;margin-top:6px;font:15px "Liberation Sans",sans-serif;height:24px;align-items:center;padding-left:3px;}
.fb{width:28px;flex:none;}
.it{font-style:italic;}
.un{text-decoration:underline;}
.wmain{flex:1;display:flex;min-height:0;}
.wrail{width:57px;flex:none;box-sizing:border-box;border-right:1px solid #dbe6ea;padding:23px 0 0 18px;display:flex;flex-direction:column;gap:20px;}
.wdoc{flex:1;background:#f3fbfd;padding:16px 0 0 47px;overflow:hidden;}
.page{height:100%;background:#fff;box-shadow:0 0 2px #d6e0e4;overflow:hidden;font:15px/36.4px "Liberation Serif","Noto Sans CJK SC",serif;color:#222;}
.phead{padding:58px 0 0 230px;height:20px;line-height:20px;font-size:14px;letter-spacing:1.800px;white-space:nowrap;color:#333;}
.phr{height:1px;background:#111;margin:12px 0 26px 111px;}
.pl{white-space:nowrap;height:36.400px;}
.wstat{height:24px;flex:none;display:flex;align-items:center;background:#f3fbfd;border-top:1px solid #dbe6ea;box-sizing:border-box;padding:0 0 3px 16px;font:13px "Liberation Sans",sans-serif;color:#333;}
.ss{width:1px;height:14px;flex:none;background:#d8dfe2;margin:0 0 0 12px;}
.nv{flex:none;}
.n1{margin-left:13px;}
.n2{margin-left:18px;}
.pgbox{width:109px;flex:none;height:20px;border:1px solid #c8d0d4;border-radius:4px;text-align:center;line-height:18px;margin-left:13px;box-sizing:border-box;background:#f9fdfe;color:#444;font-size:12.500px;}
.n3{margin-left:14px;}
.n4{margin-left:17px;}
.eye{margin-left:82px;flex:none;}
.ch{margin-left:4px;flex:none;}
.ss.s3{margin-left:14px;}

/* Edge */
.edge{position:relative;width:1457px;flex:none;box-sizing:border-box;border-left:1px solid #55595c;border-bottom:1px solid #40464a;display:flex;flex-direction:column;background:#fff;font-family:"Noto Sans CJK SC",sans-serif;margin-left:0;}
.strip{height:41px;flex:none;background:#dedede;border-top:1px solid #6b6b6b;box-sizing:border-box;display:flex;align-items:flex-end;}
.prof{width:82px;height:40px;flex:none;position:relative;display:flex;align-items:center;padding-left:11px;box-sizing:border-box;}
.tabact{margin-left:18px;}
.tabs{display:flex;height:33px;}
.tab{width:89.500px;box-sizing:border-box;display:flex;align-items:center;padding-left:10px;border-left:1px solid #aaa;height:24px;margin-top:4px;font-size:12.500px;color:#222;position:relative;}
.tab.on{height:33px;margin-top:0;padding-top:0;background:#fff;border-radius:8px 8px 0 0;border-left-color:transparent;}
.tab.on + .tab{border-left-color:transparent;}
.fav{width:16px;flex:none;}
.tt{width:28px;margin-left:9px;overflow:hidden;white-space:nowrap;flex:none;-webkit-mask-image:linear-gradient(90deg,#000 70%,transparent);mask-image:linear-gradient(90deg,#000 70%,transparent);color:#333;}
.tx{margin-left:6px;}
.plus{margin-left:9px;height:36px;display:flex;align-items:center;border-left:0;}
.wctl{margin-left:auto;display:flex;align-self:flex-start;height:32px;align-items:center;}
.wctl span{width:45px;display:flex;justify-content:center;}
.wctl span:last-child{width:46px;}
.addr{height:38px;flex:none;display:flex;align-items:center;background:#fff;font-size:13px;}
.back{margin-left:18px;}
.rel{margin-left:27px;}
.warn{margin-left:36px;}
.insec{margin-left:7px;color:#555;width:44px;font-size:14px;}
.asep{width:1px;height:18px;background:#bbb;margin:0 15px 0 9px;}
.url{font:13.300px "Roboto",sans-serif;color:#777;white-space:nowrap;letter-spacing:.22px;}
.url b{font-weight:400;color:#333;}
.tools{margin-left:auto;display:flex;align-items:center;padding-right:3px;}
.tools span{display:flex;justify-content:center;width:44px;}
.ra{font:15px "Liberation Sans",sans-serif;color:#999;}
.ra small{font-size:9px;margin-top:-4px;}
.tools .t3{margin-left:8px;}
.tools .t7{width:45px;}
.tools .t8{width:42px;}
.viewport{flex:1;display:flex;min-height:0;padding:0 0 9px 3px;}
.pagewrap{width:1393px;flex:none;display:flex;flex-direction:column;}
.dhead{height:56px;flex:none;background:linear-gradient(90deg,#000 0,#000 30%,#232323 100%);border-radius:8px 0 0 0;display:flex;align-items:center;color:#fff;}
.dlogo{font:bold 41px/56px "Liberation Sans",sans-serif;color:#f00000;-webkit-text-stroke:1.600px #f00000;margin-left:14px;width:93px;letter-spacing:-.3px;}
.dname{font-size:19.800px;}
.admin{margin-left:auto;margin-right:13px;display:flex;align-items:center;gap:3px;font:13px "Open Sans",sans-serif;}
.caret{width:0;height:0;border:4px solid transparent;border-top:5px solid #fff;border-bottom:0;margin-left:5px;}
.dbody{flex:1;display:flex;min-height:0;}
.snav{width:244px;flex:none;background:#fff;font-size:14px;color:#555;padding-top:10px;box-sizing:border-box;}
.sect{height:34px;display:flex;align-items:center;padding:0 40px 0 15px;justify-content:space-between;width:245px;box-sizing:border-box;color:#555;margin-bottom:6px;}
.sect.s2{margin-top:3px;padding-right:42px;}
.sit{height:33.200px;display:flex;align-items:center;width:220px;padding:0 0 1px 29px;box-sizing:border-box;font-size:13.500px;color:#555;}
.sit.cur{background:#4359cf;color:#fff;font-weight:500;height:33px;}
.stage{width:1124px;flex:none;background:#1c1c1c;padding:12px 0 0 51px;box-sizing:border-box;}
.pgright{flex:1;background:#fff;}
.bscroll{width:16px;flex:none;display:flex;flex-direction:column;align-items:center;position:relative;padding-left:0;box-sizing:border-box;}
.tri{width:0;height:0;border:5px solid transparent;}
.tri.up{border-bottom:6px solid #999;border-top:0;margin-top:9px;}
.bthumb{width:9px;height:615px;background:#999;border-radius:5px;margin-top:303px;}
.tri.dn{border-top:6px solid #999;border-bottom:0;margin-top:4px;}
.erail{width:43px;flex:none;border-left:1px solid #f3f3f3;display:flex;flex-direction:column;align-items:center;box-sizing:border-box;padding:1px 0 0 0;}
.ri{height:40px;display:flex;align-items:center;}
.rsep{width:28px;height:1px;background:#ccc;margin-top:13px;}
.rplus{margin-top:25px;}
.rshot{margin-top:auto;}
.rgear{margin:25px 0 3px;}

/* VM */
.vm{position:relative;width:1024px;height:768px;background:#fff;display:flex;flex-direction:column;font-family:"Open Sans","Noto Sans CJK SC",sans-serif;}
.vtitle{height:23px;flex:none;background:#fff;display:flex;align-items:center;font-size:12px;color:#888;padding-bottom:1px;box-sizing:border-box;}
.vic{margin:0 7px 0 3px;}
.vctl{margin-left:auto;display:flex;margin-right:3px;}
.vctl span{width:45.500px;display:flex;justify-content:center;}
.vhead{height:62px;flex:none;background:#3a3a3a;display:flex;align-items:center;color:#fff;position:relative;}
.backb{margin-left:12px;}
.fwdb{margin-left:3px;}
.ddn{width:0;height:0;border:5px solid transparent;border-top:5px solid #fff;border-bottom:0;}
.ddn.gray{border-top-color:#7a7a7a;margin-left:6px;}
.crumb{font-size:24px;margin-left:37px;line-height:30px;}
.crumbar{width:0;height:0;border:4px solid transparent;border-left:5px solid #fff;border-right:0;margin-left:11px;}
.crumb.c2{margin-left:11px;}
.vr{margin-left:auto;display:flex;align-items:center;font-size:12px;}
.refresh{margin-left:9px;}
.vbar{width:2px;height:18px;background:#aaa;margin-left:11px;}
.flag{margin:4px 0 0 21px;width:32px;}
.vm1{margin-left:10px;width:64px;}
.vm2{width:54px;}
.vm3{width:55px;}
.vm4{width:61px;}
.vbody{flex:1;display:flex;min-height:0;position:relative;}
.vnav{width:215px;flex:none;border-right:1px solid #d5d5d5;padding-top:21px;box-sizing:content-box;font-size:14px;color:#333;}
.vrow{height:25.700px;display:flex;align-items:center;padding-left:16px;gap:8px;white-space:nowrap;}
.vrow.cur{background:#0a6dbd;color:#bfe8ff;font-weight:500;}
.vcont{flex:1;padding:55px 0 0 28px;overflow:hidden;display:flex;flex-direction:column;}
.welcome{width:740px;height:277px;flex:none;box-sizing:border-box;border:1px solid #aaa;display:flex;justify-content:flex-end;align-items:flex-end;font-size:12px;color:#444;padding:0 19px 18px 0;}
.cards{flex:1;display:flex;gap:18px;margin-top:16px;}
.vcard{width:234px;box-sizing:border-box;border:1px solid #999;border-top:1px solid #999;border-bottom:0;display:flex;flex-direction:column;justify-content:flex-end;padding:0 0 41px 45px;font-size:13px;line-height:28px;color:#444;}
.vscroll{width:17px;flex:none;background:#fff;display:flex;flex-direction:column;align-items:center;padding-top:6px;box-sizing:border-box;}
.vthumb{width:17px;height:260px;background:#d9d9d9;margin-top:6px;}
.vdn{margin-top:auto;margin-bottom:5px;}
.vtask{height:40px;flex:none;background:#020a19;display:flex;color:#fff;}
.vstart{width:48px;flex:none;display:flex;align-items:center;justify-content:center;}
.vsearch{width:320px;flex:none;background:#fff;border-top:2px solid #cfcfcf;border-bottom:2px solid #cfcfcf;box-sizing:border-box;display:flex;align-items:center;color:#333;font-size:13.500px;padding-left:6px;gap:16px;}
.vt{width:49.500px;flex:none;display:flex;align-items:center;justify-content:center;}
.vt.act2{background:#1e2d3c;border-bottom:3px solid #8ec4ea;box-sizing:border-box;width:47px;}
.vtray{margin-left:auto;display:flex;align-items:center;padding-right:8px;}
.vti{width:24px;display:flex;justify-content:center;}
.vlang{width:24px;text-align:center;font-size:14px;}
.vclock{width:68px;display:flex;flex-direction:column;align-items:center;font-size:12px;line-height:19px;color:#eee;}
.vnote{width:48px;display:flex;justify-content:center;}
.timer{position:absolute;left:774px;top:-13px;width:48px;height:48px;box-sizing:border-box;border:2px solid #f5fbff;border-radius:50%;background:radial-gradient(circle at 50% 30%,#55b8ff,#1f8cf0 75%);color:#e4f4ff;font-size:14px;font-weight:300;text-align:center;line-height:44px;box-shadow:0 0 3px #5aa;}
.dialog{position:absolute;left:85px;top:79px;width:785px;height:559px;box-sizing:border-box;background:#fff;border:1px solid #6a6a6a;display:flex;flex-direction:column;font-size:12px;color:#333;}
.dtitle{height:28px;flex:none;display:flex;align-items:center;padding-left:8px;gap:6px;font-size:12px;}
.dctl{margin-left:auto;display:flex;margin-right:0;}
.dctl span{width:45.500px;display:flex;justify-content:center;}
.dhd{height:78px;flex:none;display:flex;justify-content:space-between;padding:0 28px 0 20px;}
h1{margin:25px 0 0;font-size:24px;font-weight:300;line-height:30px;color:#2a7f98;}
.target{padding-top:25px;text-align:right;font-size:10.200px;line-height:13px;color:#333;}
.dmain{flex:1;display:flex;min-height:0;padding-left:20px;}
.dsteps{width:172px;flex:none;box-sizing:content-box;padding-top:2px;border-right:1px solid #d8d8d8;margin-right:21px;height:385px;}
.stp{height:24px;line-height:24px;padding-left:18px;font-size:13px;color:#e4e4e4;width:172px;box-sizing:border-box;white-space:nowrap;}
.stp.ind{padding-left:36px;}
.stp.now{background:#0a6dbd;color:#fff;width:171px;}
.dright{flex:1;min-width:0;display:flex;flex-direction:column;}
.dh2{line-height:16px;height:16px;margin-top:1px;}
.dprog{display:flex;margin-top:17px;}
.dinfo{width:35px;flex:none;padding-left:8px;box-sizing:border-box;padding-top:2px;}
.dpc{line-height:16px;}
.bar{width:392px;height:7px;margin-top:10px;background:#00739c;box-shadow:0 0 0 1px #a8dbe8 inset;}
.okmsg{margin-top:7px;color:#555;white-space:nowrap;}
.listbox{margin-top:12px;width:547px;height:216px;flex:none;box-sizing:border-box;border:1px solid #8c8c8c;display:flex;overflow:hidden;}
.listin{flex:1;min-width:0;overflow:hidden;}
.lr{white-space:nowrap;color:#222;}
.lr.b{font-weight:700;}
.lr.l{color:#1b7f97;}
.lscroll{width:17px;flex:none;display:flex;flex-direction:column;align-items:center;padding-top:6px;box-sizing:border-box;}
.lscroll i{width:17px;height:42px;background:#dedede;margin-top:5px;}
.ld{margin-top:auto;margin-bottom:4px;}
.note{display:flex;margin-top:14px;line-height:15.500px;white-space:nowrap;font-size:12px;color:#333;}
.nic{width:39px;flex:none;padding-left:4px;box-sizing:border-box;margin-top:3px;}
.export{margin-top:10px;line-height:16px;color:#1b7f97;margin-left:-1px;}
.dfoot{height:43px;flex:none;border-top:1px solid #e3e3e3;display:flex;padding:11px 0 0 415px;box-sizing:border-box;}
.btn{width:75px;height:22px;box-sizing:border-box;border:1px solid #cfcfcf;text-align:center;line-height:20px;margin-right:8px;font-size:11.500px;white-space:nowrap;}
.btn.dis{color:#9a9a9a;}
.btn.pri{background:#efefef;border-color:#6e6e6e;color:#222;margin-left:24px;}

/* cursors */
.cursor{position:absolute;z-index:5;}
.c1{left:1355px;top:164px;}
.c2{left:1428px;top:20px;}

/* taskbar */
.tbar{height:40px;flex:none;display:flex;background:linear-gradient(90deg,#dff7fd,#dff5fb 55%,#dce9f6);padding-left:15px;box-sizing:border-box;font-family:"Noto Sans CJK SC",sans-serif;color:#222;}
.start{width:35px;flex:none;display:flex;align-items:center;}
.tk{width:49px;flex:none;position:relative;display:flex;align-items:center;justify-content:center;height:40px;}
.tk.hot{background:#f1fbfe;}
.tk i{position:absolute;bottom:0;left:4px;right:5px;height:3px;background:#0a67c0;}
.tray{margin-left:auto;display:flex;align-items:center;padding-right:7px;}
.sun{width:22px;height:22px;flex:none;border-radius:50%;background:radial-gradient(circle at 60% 60%,#ff9d1f,#f5820f);margin-right:11px;}
.wx{font:14px "Liberation Sans",sans-serif;width:32px;flex:none;}
.wx2{font-size:14px;width:28px;flex:none;margin-right:19px;}
.ti{width:24px;flex:none;display:flex;justify-content:center;}
.up2{width:22px;}
.ti.sp{width:18px;margin-left:4px;}
.lang{font-size:15px;width:26px;flex:none;text-align:center;margin-right:8px;}
.clock{width:54px;flex:none;display:flex;flex-direction:column;align-items:center;font:12.500px/20px "Liberation Sans",sans-serif;color:#222;}
.msg{width:56px;flex:none;position:relative;display:flex;justify-content:center;}
.msg b{position:absolute;right:10px;bottom:-7px;width:16px;height:16px;border:1px solid #888;border-radius:50%;background:#c5d3dc;font:bold 11px/16px "Liberation Sans",sans-serif;text-align:center;box-sizing:content-box;}
</style>
